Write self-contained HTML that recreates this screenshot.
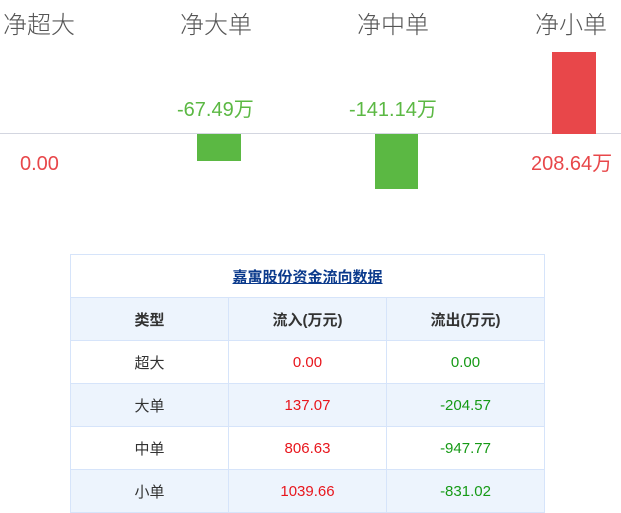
<!DOCTYPE html>
<html><head><meta charset="utf-8"><style>
*{margin:0;padding:0;box-sizing:border-box}
body{width:621px;height:511px;overflow:hidden;background:#fff;font-family:"Liberation Sans","Noto Sans CJK SC",sans-serif;position:relative}
.a{position:absolute;white-space:nowrap}
.h{font-size:24px;color:#555;top:5px;font-family:"Noto Sans CJK SC","Liberation Sans",sans-serif;font-weight:300}
.v{font-size:20px;line-height:22px}
.g{color:#5bb843}.r{color:#e8474a}
.bar{position:absolute}
table{position:absolute;left:70px;top:254px;width:475px;border-collapse:collapse;font-size:15px;color:#333;text-align:center}
td,th{border:1px solid #d6e4fa;height:43px;padding:0}
th{font-weight:bold;background:#edf4fd}
tr.e td{background:#edf4fd}
.t a{color:#0b3a8c;text-decoration:underline;font-weight:bold}
.rr{color:#e8161d}.gg{color:#169a16}
</style></head><body>
<div class="a h" style="left:3px">净超大</div>
<div class="a h" style="left:180px">净大单</div>
<div class="a h" style="left:357px">净中单</div>
<div class="a h" style="left:535px">净小单</div>
<div style="position:absolute;left:0;top:133px;width:621px;height:1px;background:#d3d6e0"></div>
<div class="bar" style="left:197px;top:134px;width:44px;height:27px;background:#5bb843"></div>
<div class="bar" style="left:375px;top:134px;width:43px;height:55px;background:#5bb843"></div>
<div class="bar" style="left:552px;top:52px;width:44px;height:82px;background:#e8474a"></div>
<div class="a v g" style="left:177px;top:99px">-67.49万</div>
<div class="a v g" style="left:349px;top:99px">-141.14万</div>
<div class="a v r" style="left:20px;top:153px">0.00</div>
<div class="a v r" style="left:531px;top:153px">208.64万</div>
<table>
<tr><td colspan="3" class="t"><a>嘉寓股份资金流向数据</a></td></tr>
<tr><th style="width:158px">类型</th><th style="width:158px">流入(万元)</th><th>流出(万元)</th></tr>
<tr><td>超大</td><td class="rr">0.00</td><td class="gg">0.00</td></tr>
<tr class="e"><td>大单</td><td class="rr">137.07</td><td class="gg">-204.57</td></tr>
<tr><td>中单</td><td class="rr">806.63</td><td class="gg">-947.77</td></tr>
<tr class="e"><td>小单</td><td class="rr">1039.66</td><td class="gg">-831.02</td></tr>
</table>
</body></html>
